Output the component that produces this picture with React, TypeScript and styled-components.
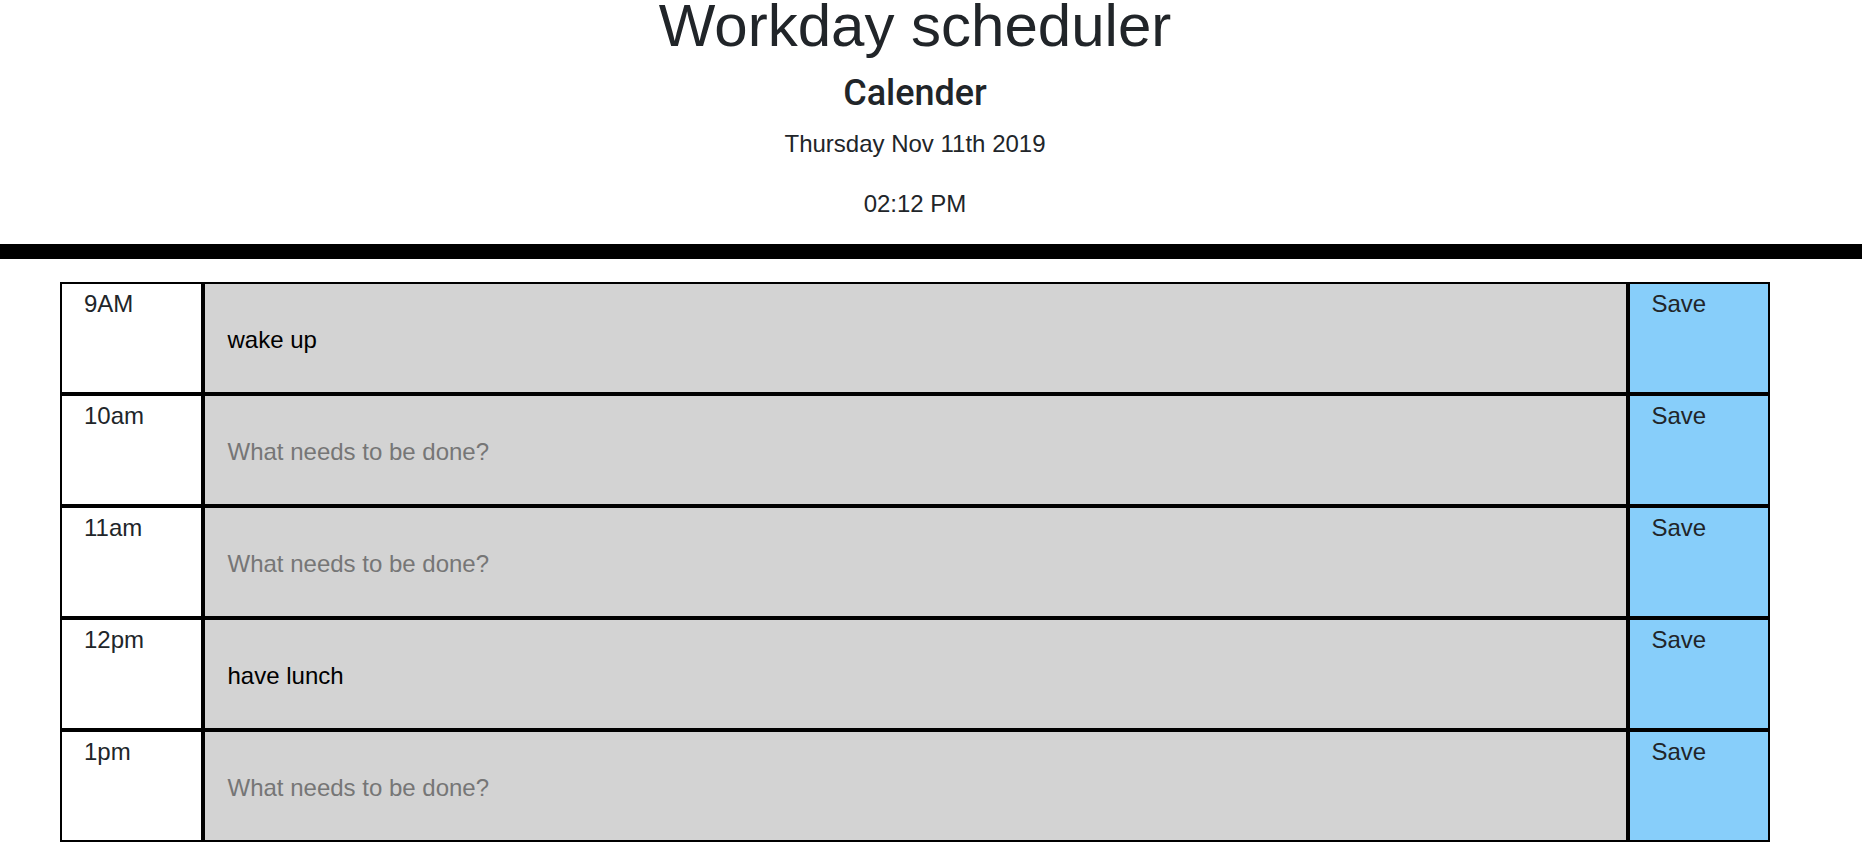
import React from "react";
import styled, { createGlobalStyle } from "styled-components";

const GlobalStyle = createGlobalStyle`
  html, body {
    margin: 0;
    padding: 0;
    background: #ffffff;
  }

  body {
    font-family: "Liberation Sans", Arial, sans-serif;
    font-size: 24px;
    line-height: 1.5;
    color: #212529;
  }

  ::-webkit-scrollbar {
    width: 10px;
  }

  ::-webkit-scrollbar-track {
    background: #f0f0f0;
  }

  ::-webkit-scrollbar-thumb {
    background: #c4c4c4;
    border-left: 2px solid #f0f0f0;
  }
`;

const hours = [
  { label: "9AM", text: "wake up" },
  { label: "10am", text: "" },
  { label: "11am", text: "" },
  { label: "12pm", text: "have lunch" },
  { label: "1pm", text: "" },
  { label: "2pm", text: "" },
  { label: "3pm", text: "" },
  { label: "4pm", text: "" },
  { label: "5pm", text: "" },
];

const App = () => {
  return (
    <>
      <GlobalStyle />
      <Header>
        <Title>Workday scheduler</Title>
        <Subtitle>Calender</Subtitle>
        <DateLine>Thursday Nov 11th 2019</DateLine>
        <TimeLine>02:12 PM</TimeLine>
      </Header>
      <Divider />
      <Schedule>
        {hours.map((h) => (
          <Row key={h.label}>
            <Hour>{h.label}</Hour>
            <Task
              defaultValue={h.text}
              placeholder="What needs to be done?"
            />
            <SaveButton type="button">Save</SaveButton>
          </Row>
        ))}
      </Schedule>
    </>
  );
};

export default App;

// styles
const Header = styled.header`
  width: 1710px;
  margin-left: 60px;
  text-align: center;
  padding-top: 1px;
`;

const Title = styled.h1`
  font-size: 60px;
  font-weight: 400;
  line-height: 60px;
  margin: -5px 0 0;
`;

const Subtitle = styled.h2`
  font-family: Roboto, "Liberation Sans", sans-serif;
  font-size: 36px;
  font-weight: 500;
  line-height: 1.2;
  margin: 16px 0 0;
`;

const DateLine = styled.p`
  margin: 11px 0 0;
`;

const TimeLine = styled.p`
  margin: 24px 0 0;
`;

const Divider = styled.div`
  width: calc(100% - 10px);
  height: 15px;
  background: #000;
  margin-top: 22px;
`;

const Schedule = styled.section`
  width: 1710px;
  margin: 23px 0 40px 60px;
`;

const Row = styled.div`
  display: grid;
  grid-template-columns: 1fr 10fr 1fr;
  height: 112px;
`;

const Hour = styled.div`
  box-sizing: border-box;
  border: 2px solid #000;
  padding: 2px 22px 0;
  background: #fff;
`;

const Task = styled.textarea`
  box-sizing: border-box;
  display: block;
  width: 100%;
  height: 100%;
  margin: 0;
  border: 2px solid #000;
  border-radius: 0;
  padding: 38px 23px 0;
  background: #d3d3d3;
  color: #000;
  font-family: "Liberation Sans", Arial, sans-serif;
  font-size: 24px;
  line-height: 1.5;
  resize: none;
  outline: none;
  overflow: hidden;

  &::placeholder {
    color: #767676;
  }
`;

const SaveButton = styled.button`
  box-sizing: border-box;
  display: flex;
  align-items: flex-start;
  justify-content: flex-start;
  margin: 0;
  border: 2px solid #000;
  border-radius: 0;
  padding: 2px 22px 0;
  background: #87cefa;
  color: #212529;
  font-family: "Liberation Sans", Arial, sans-serif;
  font-size: 24px;
  line-height: 1.5;
  cursor: pointer;
`;
